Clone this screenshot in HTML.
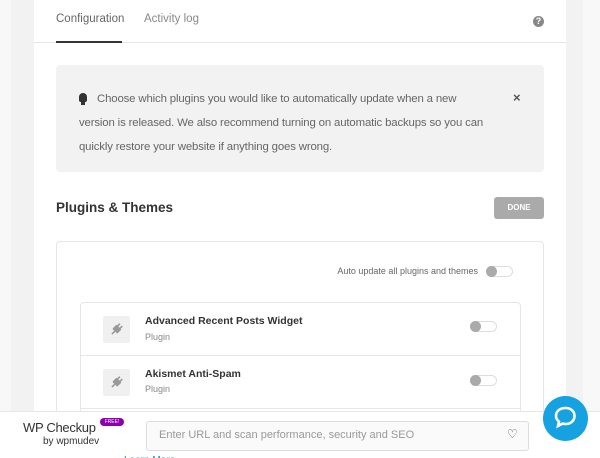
<!DOCTYPE html>
<html style="width:600px;height:458px;overflow:hidden"><head><style>
*{box-sizing:border-box;margin:0;padding:0}
body{width:600px;height:458px;overflow:hidden;background:#f2f2f2;font-family:"Liberation Sans",sans-serif;position:relative;color:#333}
.a{position:absolute}
.tog{position:absolute;width:27px;height:11px;border:1px solid #ddd;border-radius:6px;background:#fff}
.tog:before{content:"";position:absolute;left:-1px;top:-1px;width:11px;height:11px;border-radius:50%;background:#aaa}
.ic{position:absolute;width:27px;height:27px;background:#f0f0f0;border-radius:2px}
</style></head><body>
<div class="a" style="left:0;top:0;width:11px;height:458px;background:#f8f8f8"></div>
<div class="a" style="left:583px;top:0;width:17px;height:458px;background:#f8f8f8"></div>
<div class="a" style="left:34px;top:0;width:532px;height:458px;background:#fff"></div>
<div class="a" style="left:34px;top:42px;width:532px;height:1px;background:#e6e6e6"></div>
<div class="a" style="left:56px;top:13px;font-size:11.5px;color:#666">Configuration</div>
<div class="a" style="left:144px;top:13px;font-size:11.5px;color:#888">Activity log</div>
<div class="a" style="left:56px;top:41px;width:66px;height:2px;background:#333"></div>
<div class="a" style="left:533px;top:16px;width:11px;height:11px;border-radius:50%;background:#888;color:#fff;font-size:9px;font-weight:bold;text-align:center;line-height:11px">?</div>
<div class="a" style="left:56px;top:65px;width:488px;height:107px;background:#f2f2f2;border-radius:4px"></div>
<div class="a" style="left:79px;top:93px;width:8px;height:9px;border-radius:4px 4px 2px 2px;background:#333"></div>
<div class="a" style="left:81px;top:102px;width:4px;height:3px;background:#333"></div>
<div class="a" style="left:79px;top:87px;white-space:nowrap;font-size:11.4px;line-height:24px;color:#666;letter-spacing:-0.15px"><span style="padding-left:18px">Choose which plugins you would like to automatically update when a new</span><br>version is released. We also recommend turning on automatic backups so you can<br>quickly restore your website if anything goes wrong.</div>
<div class="a" style="left:513px;top:90px;font-size:13px;font-weight:bold;color:#555">×</div>
<div class="a" style="left:56px;top:200px;font-size:13.5px;font-weight:bold;color:#333">Plugins &amp; Themes</div>
<div class="a" style="left:494px;top:197px;width:50px;height:22px;background:#aaa;border-radius:3px;color:#fff;font-size:8px;font-weight:bold;text-align:center;line-height:22px">DONE</div>
<div class="a" style="left:56px;top:241px;width:488px;height:230px;border:1px solid #e6e6e6;border-radius:4px"></div>
<div class="a" style="left:300px;top:266px;width:178px;text-align:right;font-size:9px;color:#666">Auto update all plugins and themes</div>
<div class="tog" style="left:486px;top:266px"></div>
<div class="a" style="left:80px;top:302px;width:441px;height:170px;border:1px solid #e6e6e6;border-radius:4px"></div>
<div class="a" style="left:80px;top:355px;width:441px;height:1px;background:#e6e6e6"></div>
<div class="a" style="left:80px;top:408px;width:441px;height:1px;background:#e6e6e6"></div>
<div class="ic" style="left:103px;top:316px"><svg width="27" height="27"><g fill="#999" transform="rotate(45 13.5 13.5)"><rect x="10" y="10" width="7" height="6" rx="1"/><rect x="11" y="7" width="1.6" height="3.5"/><rect x="14.4" y="7" width="1.6" height="3.5"/><rect x="12.7" y="16" width="1.6" height="4"/></g></svg></div>
<div class="a" style="left:145px;top:315px;font-size:10.5px;font-weight:bold;color:#333">Advanced Recent Posts Widget</div>
<div class="a" style="left:145px;top:332px;font-size:9px;color:#888">Plugin</div>
<div class="tog" style="left:470px;top:321px"></div>
<div class="ic" style="left:103px;top:369px"><svg width="27" height="27"><g fill="#999" transform="rotate(45 13.5 13.5)"><rect x="10" y="10" width="7" height="6" rx="1"/><rect x="11" y="7" width="1.6" height="3.5"/><rect x="14.4" y="7" width="1.6" height="3.5"/><rect x="12.7" y="16" width="1.6" height="4"/></g></svg></div>
<div class="a" style="left:145px;top:368px;font-size:10.5px;font-weight:bold;color:#333">Akismet Anti-Spam</div>
<div class="a" style="left:145px;top:384px;font-size:9px;color:#888">Plugin</div>
<div class="tog" style="left:470px;top:375px"></div>
<div class="a" style="left:0;top:411px;width:600px;height:47px;background:#fff;border-top:1px solid #e6e6e6"></div>
<div class="a" style="left:23px;top:420px;font-size:13px;color:#333;letter-spacing:-0.3px">WP Checkup</div>
<div class="a" style="left:100px;top:418px;width:24px;height:8px;background:#8d00b1;border-radius:4px;color:#fff;font-size:5px;text-align:center;line-height:8px">FREE!</div>
<div class="a" style="left:43px;top:436px;font-size:10px;color:#333">by wpmudev</div>
<div class="a" style="left:146px;top:421px;width:383px;height:30px;border:1px solid #ddd;border-radius:3px;background:#fafafa"></div>
<div class="a" style="left:159px;top:429px;font-size:11px;color:#999">Enter URL and scan performance, security and SEO</div>
<div class="a" style="left:507px;top:427px;font-size:12px;color:#555">♡</div>
<div class="a" style="left:124px;top:455px;font-size:10px;color:#1a8bd0">Learn More</div>
<div class="a" style="left:543px;top:396px;width:45px;height:45px;border-radius:50%;background:#16a2e1"></div>
<svg class="a" style="left:553px;top:405px" width="25" height="25" viewBox="0 0 25 25"><path d="M12.5 3C18 3 21.5 6.5 21.5 11s-3.5 8-9 8c-1 0-2-.1-3-.4L5 21l1-4.5c-2-1.5-3-3.3-3-5.5 0-4.5 3.5-8 9.5-8z" fill="none" stroke="#fff" stroke-width="2.6"/></svg>
</body></html>
